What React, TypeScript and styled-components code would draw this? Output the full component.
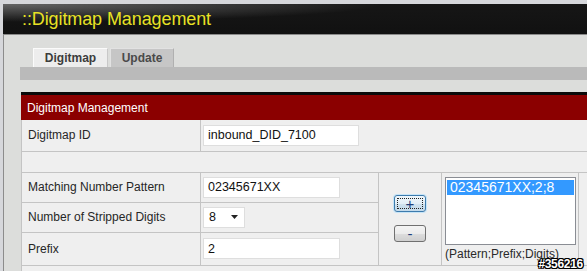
import { createGlobalStyle, styled } from "styled-components";

const GlobalStyle = createGlobalStyle`
  html, body {
    margin: 0;
    padding: 0;
    overflow: hidden;
    background: #d6d7db;
    font-family: "Liberation Sans", Arial, sans-serif;
  }
`;

const Page = styled.div`
  position: relative;
  width: 587px;
  height: 271px;
  padding: 4px 0 0 3px;
  box-sizing: border-box;
  overflow: hidden;
`;

const Header = styled.div`
  height: 30px;
  display: flex;
  align-items: center;
  padding-left: 19px;
  background:
    radial-gradient(ellipse 380px 18px at 0 0, rgba(255, 255, 255, 0.34), rgba(255, 255, 255, 0) 100%),
    linear-gradient(180deg, #161616, #111111);
  border-bottom: 1px solid #8a8a8a;
`;

const Title = styled.h1`
  margin: 0;
  font-size: 18px;
  font-weight: normal;
  color: #e8e224;
  letter-spacing: -0.1px;
`;

const Main = styled.div`
  height: 240px;
  border-left: 1px solid #8c8c8c;
  background: #dcdddb;
  padding: 13px 0 0 16px;
  box-sizing: border-box;
`;

const TabRow = styled.div`
  display: flex;
  gap: 2px;
  padding-left: 13px;
`;

const Tab = styled.div<{ $active?: boolean }>`
  width: ${(p) => (p.$active ? "75px" : "64px")};
  height: 19px;
  box-sizing: border-box;
  display: flex;
  align-items: center;
  justify-content: center;
  font-size: 12px;
  font-weight: bold;
  color: ${(p) => (p.$active ? "#3c3c3c" : "#4a4a4a")};
  background: ${(p) => (p.$active ? "#ededed" : "#c6c6c6")};
  border-top: 1px solid ${(p) => (p.$active ? "#fbfbfb" : "#e2e2e2")};
  border-left: 1px solid ${(p) => (p.$active ? "#fbfbfb" : "#e2e2e2")};
  border-right: 1px solid ${(p) => (p.$active ? "#c8c8c8" : "#b0b0b0")};
`;

const TabBar = styled.div`
  height: 13px;
  background: #bababa;
`;

const Panel = styled.div`
  margin: 12px 0 0 1px;
  border-top: 3px solid #0a0a0a;
`;

const PanelHeader = styled.div`
  height: 25px;
  display: flex;
  align-items: center;
  padding-left: 6px;
  background: #8b0000;
  color: #ffffff;
  font-size: 12px;
`;

const Table = styled.table`
  border-collapse: collapse;
  table-layout: fixed;
  width: 600px;
`;

const Cell = styled.td<{ $h?: number }>`
  height: ${(p) => (p.$h ? `${p.$h}px` : "auto")};
  padding: 0 0 0 2px;
  box-sizing: border-box;
  background: #efefef;
  border: 1px solid #c4c4c4;
  border-top: none;
  font-size: 12px;
  color: #262626;
  vertical-align: middle;
`;

const LabelCell = styled(Cell)`
  padding-left: 6px;
`;

const TextInput = styled.div<{ $w: number }>`
  width: ${(p) => p.$w}px;
  height: 21px;
  box-sizing: border-box;
  display: flex;
  align-items: center;
  padding-left: 4px;
  background: #ffffff;
  border: 1px solid #dedede;
  font-size: 12.5px;
  color: #111111;
`;

const Select = styled.div`
  width: 42px;
  height: 21px;
  box-sizing: border-box;
  display: flex;
  align-items: center;
  justify-content: space-between;
  padding: 0 6px 0 5px;
  background: #ffffff;
  border: 1px solid #dedede;
  font-size: 12.5px;
  color: #111111;
`;

const ButtonStack = styled.div`
  display: flex;
  flex-direction: column;
  align-items: center;
  gap: 13px;
  padding-right: 2px;
`;

const Button = styled.button<{ $focused?: boolean }>`
  width: 32px;
  height: 17px;
  padding: 0;
  position: relative;
  display: flex;
  align-items: center;
  justify-content: center;
  border-radius: 3px;
  border: 1px solid ${(p) => (p.$focused ? "#3d7bad" : "#707070")};
  background: ${(p) =>
    p.$focused
      ? "linear-gradient(180deg, #eef6fb 0%, #e2eef6 50%, #cfe2ee 51%, #c2d9ea 100%)"
      : "linear-gradient(180deg, #f4f4f4 0%, #ebebeb 50%, #dddddd 51%, #cfcfcf 100%)"};
  color: #1f3f7c;
  font-family: "Liberation Sans", Arial, sans-serif;
  font-size: 15px;
  font-weight: normal;
  line-height: 1;
  box-shadow: ${(p) => (p.$focused ? "0 0 0 1px #c6e4f7" : "none")};
`;

const FocusRing = styled.span`
  position: absolute;
  inset: 2px;
  border: 1px dotted #222222;
`;

const ListCell = styled(Cell)`
  vertical-align: top;
  padding: 4px 0 0 3px;
`;

const ListBox = styled.div`
  width: 131px;
  height: 68px;
  box-sizing: border-box;
  padding: 2px 1px;
  background: #ffffff;
  border: 1px solid #8a8d94;
`;

const ListItem = styled.div<{ $selected?: boolean }>`
  height: 15px;
  line-height: 15px;
  padding-left: 3px;
  font-size: 14px;
  color: ${(p) => (p.$selected ? "#ffffff" : "#111111")};
  background: ${(p) => (p.$selected ? "#3399ff" : "transparent")};
`;

const Hint = styled.div`
  margin-top: 2px;
  font-size: 12px;
  color: #2a2a2a;
`;

const Watermark = styled.span`
  position: absolute;
  right: 4px;
  bottom: 0px;
  font-size: 12px;
  font-weight: bold;
  color: #ffffff;
  letter-spacing: -0.3px;
  text-shadow:
    1px 0 0 #000, -1px 0 0 #000, 0 1px 0 #000, 0 -1px 0 #000,
    1px 1px 0 #000, -1px -1px 0 #000, 1px -1px 0 #000, -1px 1px 0 #000;
`;

function App() {
  return (
    <Page>
      <GlobalStyle />
      <Header>
        <Title>::Digitmap Management</Title>
      </Header>

      <Main>
        <TabRow>
          <Tab $active>Digitmap</Tab>
          <Tab>Update</Tab>
        </TabRow>
        <TabBar />

        <Panel>
          <PanelHeader>Digitmap Management</PanelHeader>
          <Table>
            <colgroup>
              <col style={{ width: 179 }} />
              <col style={{ width: 178 }} />
              <col style={{ width: 63 }} />
              <col style={{ width: 137 }} />
              <col style={{ width: 43 }} />
            </colgroup>
            <tbody>
              <tr>
                <LabelCell $h={31}>Digitmap ID</LabelCell>
                <Cell colSpan={4}>
                  <TextInput $w={156}>inbound_DID_7100</TextInput>
                </Cell>
              </tr>
              <tr>
                <Cell colSpan={5} $h={21} />
              </tr>
              <tr>
                <LabelCell $h={30}>Matching Number Pattern</LabelCell>
                <Cell>
                  <TextInput $w={137}>02345671XX</TextInput>
                </Cell>
                <Cell rowSpan={3}>
                  <ButtonStack>
                    <Button $focused>
                      +
                      <FocusRing />
                    </Button>
                    <Button>-</Button>
                  </ButtonStack>
                </Cell>
                <ListCell rowSpan={3}>
                  <ListBox>
                    <ListItem $selected>02345671XX;2;8</ListItem>
                  </ListBox>
                  <Hint>(Pattern;Prefix;Digits)</Hint>
                </ListCell>
                <Cell rowSpan={3} />
              </tr>
              <tr>
                <LabelCell $h={30}>Number of Stripped Digits</LabelCell>
                <Cell>
                  <Select>
                    <span>8</span>
                    <svg width="7" height="4" viewBox="0 0 7 4">
                      <path d="M0 0 H7 L3.5 4 Z" fill="#222" />
                    </svg>
                  </Select>
                </Cell>
              </tr>
              <tr>
                <LabelCell $h={33}>Prefix</LabelCell>
                <Cell>
                  <TextInput $w={137}>2</TextInput>
                </Cell>
              </tr>
              <tr>
                <Cell colSpan={5} $h={24} />
              </tr>
            </tbody>
          </Table>
        </Panel>
      </Main>

      <Watermark>#356216</Watermark>
    </Page>
  );
}

export default App;
